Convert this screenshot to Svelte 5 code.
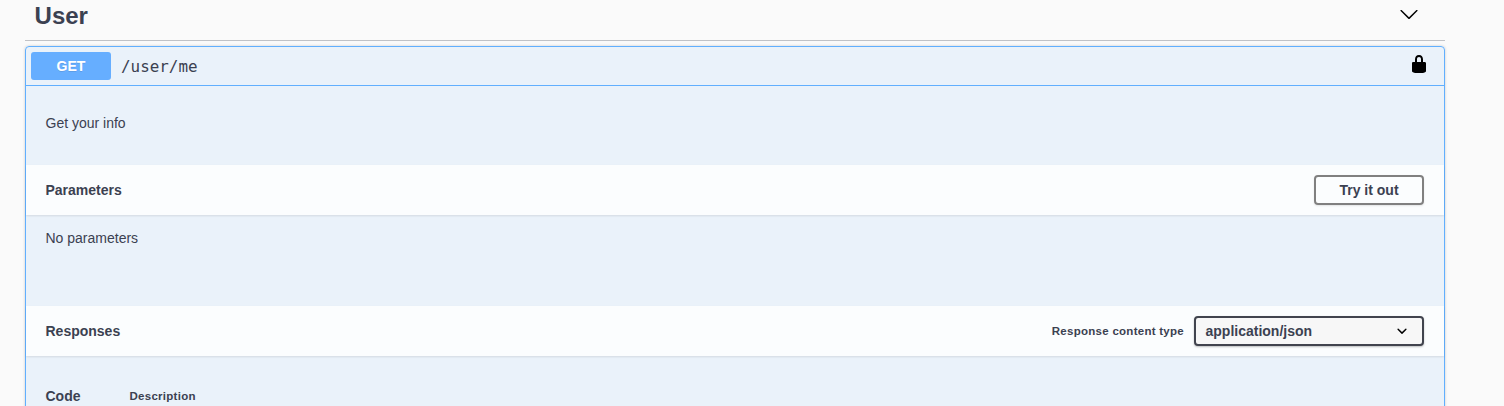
<script>
  const operation = { method: 'GET', path: '/user/me', description: 'Get your info' };
</script>

<main>
  <h4 class="tag">
    <span>User</span>
    <svg width="20" height="20" viewBox="0 0 20 20"><path d="M17.418 6.109c.272-.268.709-.268.979 0s.271.701 0 .969l-7.908 7.83c-.27.268-.707.268-.979 0l-7.908-7.83c-.27-.268-.27-.701 0-.969.271-.268.709-.268.979 0L10 13.25l7.418-7.141z" /></svg>
  </h4>
  <section class="opblock">
    <div class="summary">
      <span class="method">{operation.method}</span>
      <span class="path">{operation.path}</span>
      <svg width="20" height="20" viewBox="0 0 20 20"><path d="M15.8 8H14V5.6C14 2.703 12.665 1 10 1 7.334 1 6 2.703 6 5.6V8H4c-.553 0-1 .646-1 1.199V17c0 .549.428 1.139.951 1.307l1.197.387C5.672 18.861 6.55 19 7.1 19h5.8c.549 0 1.428-.139 1.951-.307l1.196-.387c.524-.167.953-.757.953-1.306V9.199C17 8.646 16.352 8 15.8 8zM12 8H8V5.199C8 3.754 8.797 3 10 3c1.203 0 2 .754 2 2.199V8z" /></svg>
    </div>
    <div class="description">{operation.description}</div>
    <div class="bar">
      <h4>Parameters</h4>
      <button>Try it out</button>
    </div>
    <div class="empty">No parameters</div>
    <div class="bar">
      <h4>Responses</h4>
      <span class="label">Response content type</span>
      <div class="select">
        <span>application/json</span>
        <svg width="20" height="20" viewBox="0 0 20 20"><path d="M13.418 7.859a.695.695 0 0 1 .978 0 .68.68 0 0 1 0 .969l-3.908 3.83a.697.697 0 0 1-.979 0l-3.908-3.83a.68.68 0 0 1 0-.969.695.695 0 0 1 .978 0L10 11l3.418-3.141z" /></svg>
      </div>
    </div>
    <div class="columns">
      <span class="code">Code</span>
      <span class="desc">Description</span>
    </div>
  </section>
</main>

<style>
  :global(body) {
    background: #fafafa;
    overflow: hidden;
  }
  main {
    box-sizing: border-box;
    height: 406px;
    overflow: hidden;
    padding: 0 59px 0 25px;
    font: 14px/16px "Liberation Sans", Arial, sans-serif;
    color: #3b4151;
  }
  h4 {
    margin: 0;
    flex: 1;
    font-size: 14px;
  }
  .tag {
    display: flex;
    align-items: center;
    justify-content: space-between;
    box-sizing: border-box;
    height: 41px;
    padding: 0 26px 11px 9.6px;
    margin-bottom: 5px;
    border-bottom: 1px solid rgba(59, 65, 81, 0.3);
    font-size: 24px;
    line-height: 28px;
  }
  .tag span {
    padding-top: 2px;
  }
  .tag svg {
    margin-top: -2px;
  }
  .opblock {
    height: 420px;
    border: 1px solid #61affe;
    border-radius: 4px;
    background: rgba(97, 175, 254, 0.1);
    box-shadow: 0 0 3px rgba(0, 0, 0, 0.19);
  }
  .summary {
    display: flex;
    align-items: center;
    height: 28px;
    padding: 5px 15px 5px 5px;
    border-bottom: 1px solid #61affe;
  }
  .method {
    width: 80px;
    border-radius: 3px;
    background: #66aeff;
    color: #fff;
    font-weight: 700;
    line-height: 28px;
    text-align: center;
    text-shadow: 0 1px 0 rgba(0, 0, 0, 0.1);
  }
  .path {
    flex: 1;
    padding: 2px 0 0 10px;
    font: 15.9px/20px "DejaVu Sans Mono", monospace;
  }
  .summary svg {
    margin-top: -5px;
  }
  .description {
    height: 50px;
    padding: 29px 19.5px 0;
  }
  .bar {
    display: flex;
    align-items: center;
    box-sizing: border-box;
    height: 50px;
    padding: 0 20px 0 19.5px;
    background: rgba(255, 255, 255, 0.8);
    box-shadow: 0 1px 2px rgba(0, 0, 0, 0.1);
  }
  button {
    width: 110px;
    height: 30px;
    padding: 0;
    border: 2px solid gray;
    border-radius: 4px;
    background: transparent;
    box-shadow: 0 1px 2px rgba(0, 0, 0, 0.1);
    color: #3b4151;
    font: 700 14px/16px "Liberation Sans", Arial, sans-serif;
  }
  .empty {
    height: 76px;
    padding: 15px 19.5px 0;
  }
  .label {
    margin-right: 10px;
    font-size: 11.5px;
    font-weight: 700;
    letter-spacing: 0.27px;
  }
  .select {
    display: flex;
    align-items: center;
    justify-content: space-between;
    box-sizing: border-box;
    width: 230px;
    height: 30px;
    padding: 0 10px 0 9.5px;
    border: 2px solid #41444e;
    border-radius: 4px;
    background: #f7f7f7;
    box-shadow: 0 1px 2px rgba(0, 0, 0, 0.25);
    font-weight: 700;
  }
  .columns {
    display: flex;
    align-items: center;
    padding: 32px 19.5px 0;
    font-weight: 700;
  }
  .code {
    width: 84px;
  }
  .desc {
    font-size: 11.5px;
    letter-spacing: 0.27px;
  }
</style>
